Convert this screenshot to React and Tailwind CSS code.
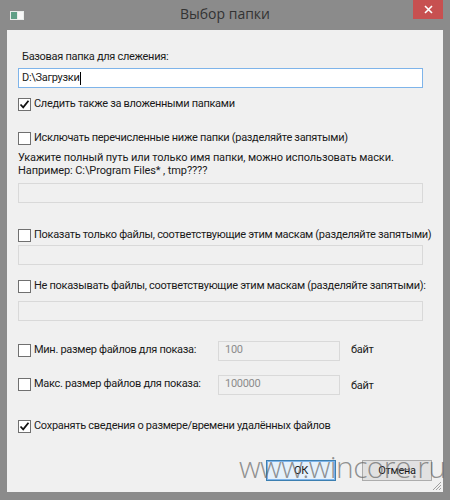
import React from "react";

const Check = ({ checked }) => (
  <span className="w-[13px] h-[13px] border border-[#707070] bg-white flex items-center justify-center shrink-0">
    {checked && (
      <svg width="11" height="11" viewBox="0 0 11 11">
        <path d="M1.5 5.5 L4.2 8.3 L9.5 1.8" fill="none" stroke="#111" strokeWidth="1.8" />
      </svg>
    )}
  </span>
);

const CheckRow = ({ checked, label, className = "" }) => (
  <div className={`flex items-center gap-[3px] h-[13px] shrink-0 ${className}`}>
    <Check checked={checked} />
    <span className="whitespace-nowrap">{label}</span>
  </div>
);

const DisabledBox = ({ className = "", value }) => (
  <div className={`h-[20px] shrink-0 border border-[#d9d9d9] bg-[#f0f0f0] text-[#8c8c8c] px-[6px] flex items-center ${className}`}>
    {value}
  </div>
);

export default function App() {
  return (
    <div className="w-[450px] h-[500px] bg-[#8b8b8b] flex flex-col relative overflow-hidden font-['Roboto',sans-serif] text-[11px] tracking-[-0.3px] text-[#1a1a1a]">
      {/* title bar */}
      <div className="h-[30px] flex items-start relative shrink-0">
        <svg className="absolute left-[10px] top-[11px]" width="14" height="9" viewBox="0 0 14 9">
          <rect x="0" y="0" width="14" height="9" fill="#e8ecea" />
          <rect x="1" y="1" width="6" height="7" fill="#5f9f86" />
          <rect x="8" y="1" width="5" height="7" fill="#f7f7f7" />
        </svg>
        <div className="flex-1 text-center text-[14px] tracking-normal text-[#333] leading-[30px] -mt-[1px] font-['Open_Sans',sans-serif]">Выбор папки</div>
        <div className="absolute right-[7px] top-0 w-[30px] h-[19px] bg-[#c75050] flex items-center justify-center">
          <svg width="9" height="9" viewBox="0 0 9 9">
            <path d="M1 1 L8 8 M8 1 L1 8" stroke="#fff" strokeWidth="1.6" />
          </svg>
        </div>
      </div>

      {/* client area */}
      <div className="mx-[7px] h-[462px] shrink-0 bg-[#f0f0f0] pl-[11px] pr-[20px] flex flex-col relative">
        <div className="mt-[20px] leading-[14px] pl-[4px] whitespace-nowrap">Базовая папка для слежения:</div>
        <div className="mt-[4px] h-[20px] shrink-0 border border-[#7eb4ea] bg-white px-[3px] flex items-center">
          D:\Загрузки<span className="w-px h-[13px] bg-black ml-px" />
        </div>
        <CheckRow checked className="mt-[10px]" label="Следить также за вложенными папками" />

        <CheckRow className="mt-[21px]" label="Исключать перечисленные ниже папки (разделяйте запятыми)" />
        <div className="mt-[6px] leading-[13px] whitespace-nowrap tracking-[-0.1px]">
          Укажите полный путь или только имя папки, можно использовать маски.
          <br />
          Например: C:\Program Files* , tmp????
        </div>
        <DisabledBox className="mt-[6px]" />

        <CheckRow className="mt-[26px]" label="Показать только файлы, соответствующие этим маскам (разделяйте запятыми)" />
        <DisabledBox className="mt-[3px]" />

        <CheckRow className="mt-[15px]" label="Не показывать файлы, соответствующие этим маскам (разделяйте запятыми):" />
        <DisabledBox className="mt-[8px]" />

        <div className="mt-[20px] flex items-center h-[19px] shrink-0">
          <div className="w-[200px]">
            <CheckRow label="Мин. размер файлов для показа:" />
          </div>
          <DisabledBox className="w-[122px] h-[19px]" value="100" />
          <span className="ml-[11px]">байт</span>
        </div>
        <div className="mt-[15px] flex items-center h-[19px] shrink-0">
          <div className="w-[200px]">
            <CheckRow label="Макс. размер файлов для показа:" />
          </div>
          <DisabledBox className="w-[122px] h-[19px]" value="100000" />
          <span className="ml-[11px] mt-[4px]">байт</span>
        </div>

        <CheckRow checked className="mt-[26px]" label="Сохранять сведения о размере/времени удалённых файлов" />

        <div className="mt-[27px] flex justify-end gap-[26px] -mr-[9px]">
          <button className="w-[70px] h-[21px] border border-[#3c7fb1] bg-[#e5f1fb] shadow-[inset_0_0_0_1px_#7eb4ea] text-[11px] leading-none">
            ОК
          </button>
          <button className="w-[70px] h-[21px] border border-[#acacac] bg-[#e1e1e1] text-[11px] leading-none">
            Отмена
          </button>
        </div>

        <svg className="absolute right-[1px] bottom-[1px]" width="11" height="11" viewBox="0 0 11 11">
          <path d="M10 2 L2 10 M10 5 L5 10 M10 8 L8 10" stroke="#a0a0a0" strokeWidth="1" />
        </svg>

        <div className="absolute left-[232px] top-[422px] text-[30px] font-light tracking-[-0.6px] text-[#666]/70 font-['Open_Sans',sans-serif] leading-none pointer-events-none whitespace-nowrap">
          www.wincore.ru
        </div>
      </div>
    </div>
  );
}
